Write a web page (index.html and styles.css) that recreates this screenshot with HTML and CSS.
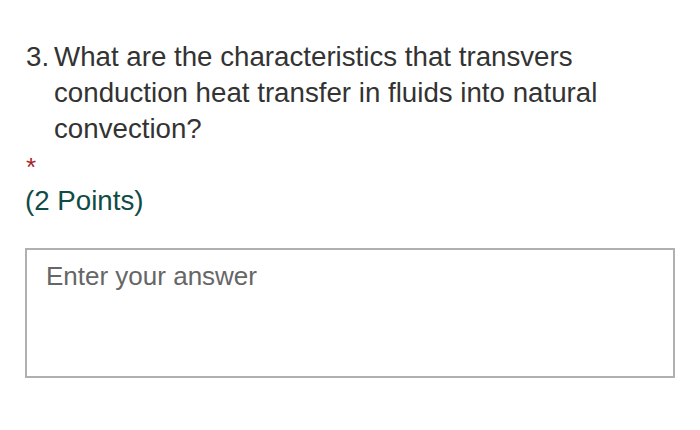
FILE: index.html
```html
<!DOCTYPE html>
<html lang="en">
<head>
<meta charset="utf-8">
<title>Question 3</title>
<link rel="stylesheet" href="styles.css">
</head>
<body>
<main class="question">
  <div class="title">
    <span class="num">3.</span>
    <span class="text">What are the characteristics that transvers conduction heat transfer in fluids into natural convection?</span>
  </div>
  <div class="required">*</div>
  <div class="points">(2 Points)</div>
  <div class="answer"><span class="placeholder">Enter your answer</span></div>
</main>
</body>
</html>
```
FILE: styles.css
```css
html, body {
  margin: 0;
  padding: 0;
  background: #ffffff;
}
body {
  font-family: "Liberation Sans", Arial, sans-serif;
  width: 700px;
  height: 430px;
  overflow: hidden;
}
.question {
  padding: 39px 25px 0 25px;
}
.title {
  display: flex;
  font-size: 27.7px;
  line-height: 36px;
  color: #333333;
}
.num {
  flex: 0 0 28px;
  padding-left: 1px;
}
.text {
  width: 580px;
}
.required {
  color: #a4262c;
  font-size: 26px;
  line-height: 28px;
  height: 24px;
  padding-left: 1px;
  margin-top: 6px;
}
.points {
  color: #0f4c44;
  font-size: 27.7px;
  line-height: 36px;
  margin-top: 6px;
}
.answer {
  margin-top: 29px;
  height: 106px;
  border: 2px solid #b0b0b0;
  padding: 10px 19px;
}
.placeholder {
  color: #666666;
  font-size: 26px;
  line-height: 32px;
}
```
